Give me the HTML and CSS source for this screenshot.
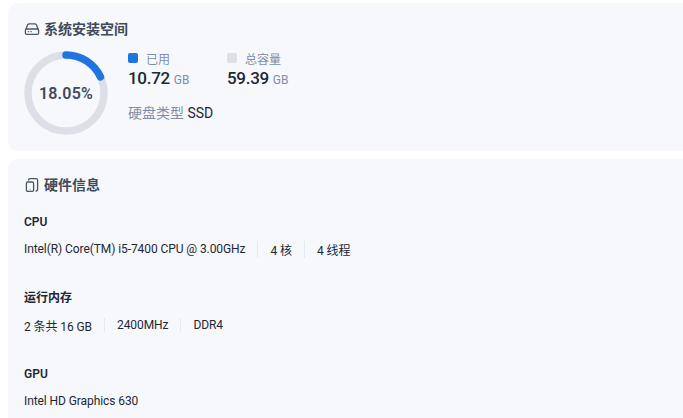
FILE: index.html
```html
<!DOCTYPE html>
<html lang="zh-CN">

<head>
    <meta charset="UTF-8" />
    <title>系统信息</title>
    <link rel="stylesheet" href="styles.css">
</head>

<body>
    <div class="page">
        <section class="card disk-card">
            <h2 class="card-title">
                <svg class="title-icon" width="16" height="16" viewBox="0 0 16 16" fill="none" stroke="#4b5563" stroke-width="1.3">
                    <path d="M1.8 8.5 3.6 3.8A1.6 1.6 0 0 1 5 2.8h6a1.6 1.6 0 0 1 1.4 1L14.2 8.5" />
                    <rect x="1.4" y="8" width="13.2" height="5.4" rx="1.5" />
                    <path d="M3.8 10.7h1.4M6.4 10.7h1.4" stroke-width="1" />
                </svg>
                系统安装空间
            </h2>
            <div class="disk-body">
                <div class="ring">
                    <svg width="84" height="84" viewBox="0 0 84 84" fill="none" stroke-width="7.5">
                        <circle cx="42" cy="42" r="38" stroke="#dcdfe6" />
                        <circle class="ring-value" cx="42" cy="42" r="38" stroke="#1f74e0" stroke-linecap="round"
                            pathLength="100" stroke-dasharray="18.05 100" />
                    </svg>
                    <span class="ring-text">18.05%</span>
                </div>
                <div class="disk-info">
                    <div class="stats">
                        <div class="stat">
                            <div class="stat-label"><i class="dot dot-used"></i>已用</div>
                            <div class="stat-value">10.72 <small>GB</small></div>
                        </div>
                        <div class="stat">
                            <div class="stat-label"><i class="dot dot-total"></i>总容量</div>
                            <div class="stat-value">59.39 <small>GB</small></div>
                        </div>
                    </div>
                    <div class="disk-type"><span>硬盘类型</span> SSD</div>
                </div>
            </div>
        </section>

        <section class="card">
            <h2 class="card-title">
                <svg class="title-icon" width="16" height="16" viewBox="0 0 16 16" fill="none" stroke="#4b5563" stroke-width="1.3">
                    <path d="M4.6 3.6V3a1.4 1.4 0 0 1 1.4-1.4h6.2A1.4 1.4 0 0 1 13.6 3v9.6a1.4 1.4 0 0 1-1.4 1.4h-.6" />
                    <rect x="2.4" y="5" width="7.2" height="9.4" rx="1.4" />
                    <path d="M6 11.9v.7" stroke-width="1.2" />
                </svg>
                硬件信息
            </h2>
            <div class="hw-list">
                <div class="hw-group">
                    <h3>CPU</h3>
                    <div class="hw-row"><span>Intel(R) Core(TM) i5-7400 CPU @ 3.00GHz</span><span>4 核</span><span>4 线程</span></div>
                </div>
                <div class="hw-group">
                    <h3>运行内存</h3>
                    <div class="hw-row"><span>2 条共 16 GB</span><span>2400MHz</span><span>DDR4</span></div>
                </div>
                <div class="hw-group">
                    <h3>GPU</h3>
                    <div class="hw-row"><span>Intel HD Graphics 630</span></div>
                </div>
            </div>
        </section>
    </div>
</body>

</html>
```

FILE: styles.css
```css
:root {
    --card: #f6f8fc;
    --title: #3f4a5a;
    --text: #1f2733;
    --muted: #7f8ea6;
}

html,
body {
    height: 100%;
    overflow: hidden;
}

body {
    margin: 0;
    background-color: #fff;
    color: var(--text);
    font-family: Roboto, "Noto Sans CJK SC", sans-serif;
}

.page {
    width: 720px;
    height: 415px;
    overflow: hidden;
    padding: 3px 0 0 8px;
    display: flex;
    flex-direction: column;
    gap: 8px;
}

.card {
    background-color: var(--card);
    border-radius: 10px;
    padding: 16px;
}

.disk-card {
    flex: none;
    height: 148px;
    box-sizing: border-box;
}

.card-title {
    margin: 0;
    display: flex;
    align-items: center;
    gap: 4px;
    height: 20px;
    font-size: 14px;
    line-height: 20px;
    font-weight: 600;
    color: var(--title);
}

.disk-body {
    display: flex;
    gap: 20px;
    margin-top: 12px;
}

.ring {
    position: relative;
    width: 84px;
    height: 84px;
}

.ring-value {
    transform: rotate(-90deg);
    transform-origin: center;
}

.ring-text {
    position: absolute;
    inset: 0;
    display: flex;
    align-items: center;
    justify-content: center;
    font-size: 16px;
    font-weight: 600;
    letter-spacing: 0.2px;
    color: var(--title);
}

.disk-info {
    margin-top: -2px;
}

.stats {
    display: flex;
}

.stat {
    width: 99px;
}

.stat-label {
    display: flex;
    align-items: center;
    gap: 8px;
    height: 18px;
    font-size: 12px;
    color: var(--muted);
}

.dot {
    width: 10px;
    height: 10px;
    border-radius: 2px;
}

.dot-used {
    background-color: #1f74e0;
}

.dot-total {
    background-color: #dcdfe6;
}

.stat-value {
    font-size: 17px;
    font-weight: 500;
    letter-spacing: -0.3px;
    line-height: 22px;
}

.stat-value small {
    font-size: 12px;
    font-weight: 400;
    letter-spacing: 0;
    color: var(--muted);
}

.disk-type {
    margin-top: 12px;
    font-size: 14px;
    line-height: 20px;
}

.disk-type span {
    color: var(--muted);
}

.hw-list {
    margin-top: 17px;
}

.hw-group {
    height: 76px;
}

.hw-group h3 {
    margin: 0;
    height: 20px;
    line-height: 20px;
    font-size: 12px;
    font-weight: 600;
}

.hw-row {
    display: flex;
    align-items: center;
    margin-top: 7px;
    height: 20px;
    font-size: 12px;
    letter-spacing: -0.08px;
}

.hw-row span + span {
    margin-left: 12px;
    padding-left: 12px;
    border-left: 1px solid #e6e9f0;
}
```
